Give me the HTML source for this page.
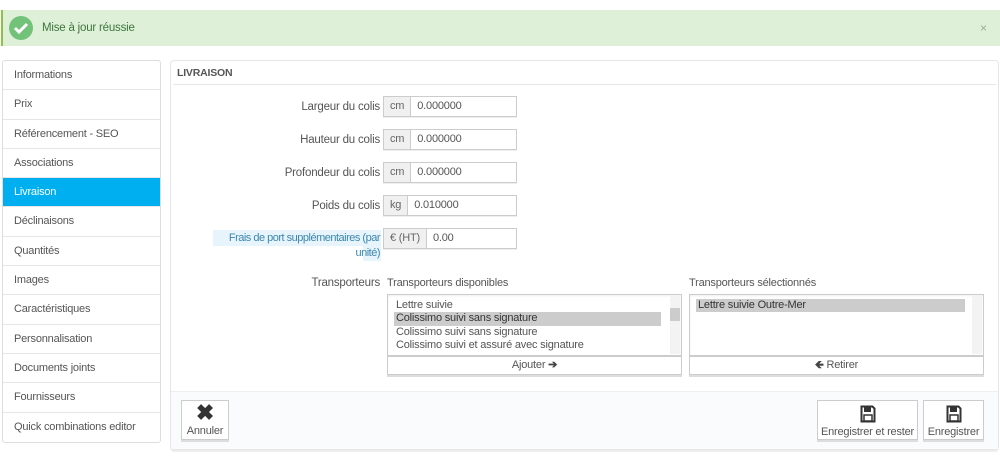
<!DOCTYPE html>
<html><head><meta charset="utf-8"><style>
*{box-sizing:border-box;margin:0;padding:0}
body{width:1000px;height:474px;background:#fff;font-family:"Liberation Sans",sans-serif;font-size:11px;color:#555;position:relative;overflow:hidden;letter-spacing:-0.2px}
.abs{position:absolute}
.alert{left:1px;top:10px;width:999px;height:36px;background:#dff0d8;border-left:2px solid #8bc34a}
.side{left:2px;top:60px;width:159px;border:1px solid #ddd;border-radius:3px;background:#fff}
.side div{height:29.3px;line-height:29px;padding-left:11px;border-bottom:1px solid #e6e6e6;color:#555}
.side div.act{background:#00aff0;color:#fff}
.panel{left:170px;top:60px;width:829px;height:390px;border:1px solid #e6e6e6;border-radius:4px;box-shadow:0 2px 0 #eee}
.lbl{text-align:right;width:210px;left:170px;font-size:11.5px}
.ig{left:383px;height:21px;border:1px solid #ccc;display:flex;background:#fff;box-shadow:0 1px 0 #eee}
.ig span{background:#f0f0f0;border-right:1px solid #ccc;padding:0 6px;line-height:19px;color:#666}
.ig b{font-weight:normal;padding-left:6px;line-height:19px;color:#555}
.list{border:1px solid #ccc;background:#fff;height:62px;box-shadow:inset 0 1px 2px #eee}
.list p{height:13.4px;line-height:13px;padding-left:8px;margin-right:20px}
.sb{position:absolute;right:1px;top:1px;bottom:1px;width:10px;background:#f3f3f3}
.btn{border:1px solid #ccc;background:#fff;text-align:center;box-shadow:0 2px 0 #ddd}
</style></head><body>
<div class="abs alert"></div>
<div class="abs" style="left:9px;top:16px;width:24px;height:24px;border-radius:50%;background:#72c279"></div>
<svg class="abs" style="left:13px;top:21px" width="16" height="14" viewBox="0 0 16 14"><path d="M2 7 L6 11 L14 3" stroke="#fff" stroke-width="3" fill="none"/></svg>
<div class="abs" style="left:42px;top:22px;color:#3c763d;font-size:11.5px">Mise à jour réussie</div>
<div class="abs" style="left:980px;top:21px;color:#9a9;font-size:12px">×</div>

<div class="abs side">
<div>Informations</div><div>Prix</div><div>Référencement - SEO</div><div>Associations</div><div class="act">Livraison</div><div>Déclinaisons</div><div>Quantités</div><div>Images</div><div>Caractéristiques</div><div>Personnalisation</div><div>Documents joints</div><div>Fournisseurs</div><div style="border:0">Quick combinations editor</div>
</div>

<div class="abs panel"></div>
<div class="abs" style="left:177px;top:67px;font-weight:bold;font-size:10.5px;color:#555">LIVRAISON</div>
<div class="abs" style="left:173px;top:84px;width:823px;height:1px;background:#e6e6e6"></div>

<div class="abs lbl" style="top:101px">Largeur du colis</div>
<div class="abs ig" style="top:96px;width:134px"><span>cm</span><b>0.000000</b></div>
<div class="abs lbl" style="top:134px">Hauteur du colis</div>
<div class="abs ig" style="top:129px;width:134px"><span>cm</span><b>0.000000</b></div>
<div class="abs lbl" style="top:167px">Profondeur du colis</div>
<div class="abs ig" style="top:162px;width:134px"><span>cm</span><b>0.000000</b></div>
<div class="abs lbl" style="top:200px">Poids du colis</div>
<div class="abs ig" style="top:195px;width:134px"><span>kg</span><b>0.010000</b></div>
<div class="abs" style="left:213px;top:230px;width:168px;height:16px;background:#e8f4fb"></div>
<div class="abs" style="left:363px;top:246px;width:18px;height:15px;background:#e8f4fb"></div>
<div class="abs" style="left:170px;top:231px;width:210px;color:#3a87ad;text-align:right;font-size:11px;letter-spacing:-0.5px;line-height:15px;white-space:nowrap">Frais de port supplémentaires (par<br>unité)</div>
<div class="abs ig" style="top:228px;width:134px"><span>€ (HT)</span><b>0.00</b></div>

<div class="abs lbl" style="top:277px">Transporteurs</div>
<div class="abs" style="left:387px;top:277px">Transporteurs disponibles</div>
<div class="abs" style="left:689px;top:277px">Transporteurs sélectionnés</div>
<div class="abs list" style="left:387px;top:294px;width:295px;padding-top:4px">
<p>Lettre suivie</p><p style="background:#ccc;color:#333;margin-left:6px;padding-left:2px">Colissimo suivi sans signature</p><p>Colissimo suivi sans signature</p><p>Colissimo suivi et assuré avec signature</p>
<div class="sb"><div style="margin-top:12px;height:13px;background:#ccc"></div></div></div>
<div class="abs list" style="left:689px;top:294px;width:295px;padding-top:4px">
<p style="background:#ccc;color:#333;margin-right:18px;margin-left:6px;padding-left:2px">Lettre suivie Outre-Mer</p><div class="sb"></div></div>
<div class="abs btn" style="left:387px;top:356px;width:295px;height:19px;line-height:17px">Ajouter <b style="color:#444">➔</b></div>
<div class="abs btn" style="left:689px;top:356px;width:295px;height:19px;line-height:17px"><b style="color:#444">🡸</b> Retirer</div>

<div class="abs" style="left:171px;top:391px;width:827px;height:58px;background:#fafbfc;border-top:1px solid #eee"></div>
<div class="abs btn" style="left:181px;top:400px;width:48px;height:40px"><div style="font-size:22px;font-weight:bold;color:#333;line-height:24px">✖</div><div>Annuler</div></div>
<div class="abs btn" style="left:817px;top:400px;width:101px;height:40px"><svg width="16" height="18" viewBox="0 0 16 18" style="margin-top:4px"><path d="M1.5 1.5h11l2 2v13h-13z" fill="none" stroke="#333" stroke-width="2"/><rect x="4" y="2" width="7" height="5" fill="#333"/><rect x="4" y="10" width="8" height="6" fill="none" stroke="#333" stroke-width="1.5"/></svg><div>Enregistrer et rester</div></div>
<div class="abs btn" style="left:923px;top:400px;width:61px;height:40px"><svg width="16" height="18" viewBox="0 0 16 18" style="margin-top:4px"><path d="M1.5 1.5h11l2 2v13h-13z" fill="none" stroke="#333" stroke-width="2"/><rect x="4" y="2" width="7" height="5" fill="#333"/><rect x="4" y="10" width="8" height="6" fill="none" stroke="#333" stroke-width="1.5"/></svg><div>Enregistrer</div></div>
</body></html>
